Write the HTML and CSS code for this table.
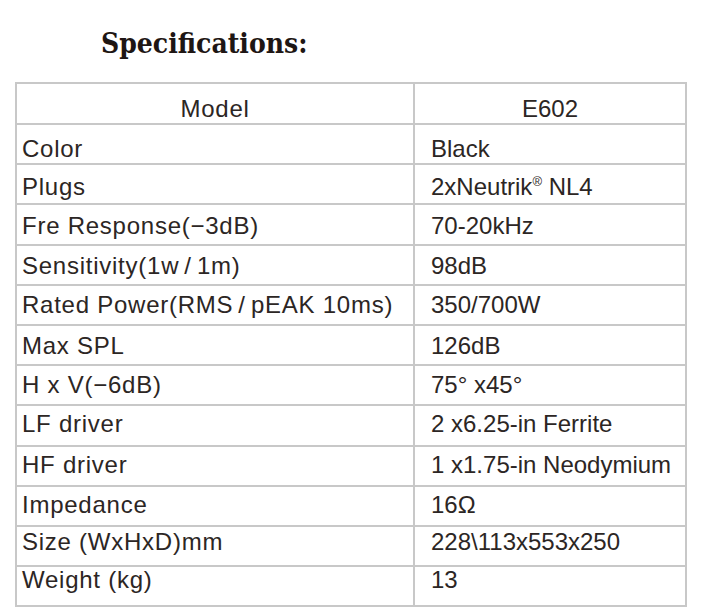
FILE: index.html
```html
<!DOCTYPE html>
<html>
<head>
<meta charset="utf-8">
<link rel="stylesheet" href="styles.css">
</head>
<body>
<h1 class="title">Specifications:</h1>
<table class="spec">
  <tr class="head"><td class="k c">Model</td><td class="v c">E602</td></tr>
  <tr><td class="k">Color</td><td class="v">Black</td></tr>
  <tr><td class="k">Plugs</td><td class="v">2xNeutrik<sup class="reg">®</sup> NL4</td></tr>
  <tr><td class="k">Fre Response(−3dB)</td><td class="v">70-20kHz</td></tr>
  <tr><td class="k">Sensitivity(1w<span class="fw">/</span>1m)</td><td class="v">98dB</td></tr>
  <tr><td class="k">Rated Power(RMS<span class="fw">/</span>pEAK 10ms)</td><td class="v">350/700W</td></tr>
  <tr><td class="k">Max SPL</td><td class="v">126dB</td></tr>
  <tr><td class="k">H x V(−6dB)</td><td class="v">75° x45°</td></tr>
  <tr><td class="k">LF driver</td><td class="v">2 x6.25-in Ferrite</td></tr>
  <tr><td class="k">HF driver</td><td class="v">1 x1.75-in Neodymium</td></tr>
  <tr><td class="k">Impedance</td><td class="v">16Ω</td></tr>
  <tr><td class="k">Size (WxHxD)mm</td><td class="v">228\113x553x250</td></tr>
  <tr><td class="k">Weight (kg)</td><td class="v">13</td></tr>
</table>
</body>
</html>
```
FILE: styles.css
```css
html, body {
  margin: 0;
  padding: 0;
  background: #fff;
}
body {
  padding: 27px 0 0 15px;
}
.title {
  margin: 0 0 21px 86px;
  font-family: "DejaVu Serif Condensed", "DejaVu Serif", serif;
  font-weight: bold;
  font-size: 28px;
  line-height: 34px;
  letter-spacing: 0;
  color: #1e1614;
}
.spec {
  border-collapse: collapse;
  width: 672px;
  border: 2px solid #c3c3c3;
  font-family: "Liberation Sans", Arial, sans-serif;
  font-size: 24px;
  color: #2c2624;
}
.spec tr {
  height: 40.2px;
}
.spec tr.head {
  height: 41px;
}
.spec td {
  border: 2px solid #c8c8c8;
  padding: 5px 0 0 5px;
  vertical-align: top;
  line-height: 26px;
  white-space: nowrap;
}
.spec td.k {
  width: 391px;
  letter-spacing: 0.75px;
}
.spec td.v {
  padding-left: 16px;
  letter-spacing: 0;
}
.spec td.c {
  text-align: center;
  padding-left: 0;
}
.spec tr:nth-child(1) td { padding-top: 12px; }
.spec tr:nth-child(2) td { padding-top: 11px; }
.spec tr:nth-child(3) td { padding-top: 9px; }
.spec tr:nth-child(4) td { padding-top: 8px; }
.spec tr:nth-child(5) td { padding-top: 7px; }
.spec tr:nth-child(6) td { padding-top: 6px; }
.spec tr:nth-child(7) td { padding-top: 7px; }
.spec tr:nth-child(8) td { padding-top: 6px; }
.spec tr:nth-child(9) td,
.spec tr:nth-child(10) td,
.spec tr:nth-child(11) td { padding-top: 5px; }
.spec tr:nth-child(12) td { padding-top: 2px; }
.spec tr:nth-child(13) td { padding-top: 0; }
.fw {
  display: inline-block;
  margin: 0 6px 0 5px;
  letter-spacing: 0;
}
.reg {
  font-size: 13px;
  line-height: 0;
  vertical-align: 9px;
}
```
